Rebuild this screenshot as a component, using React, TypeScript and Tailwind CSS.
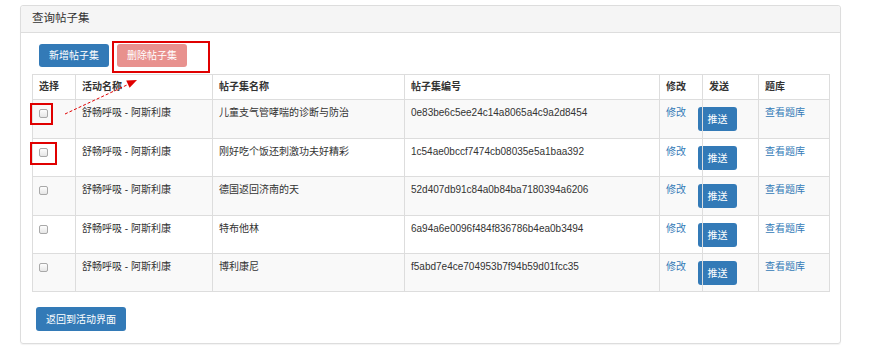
import React from "react";

const rows = [
  { name: "儿童支气管哮喘的诊断与防治", code: "0e83be6c5ee24c14a8065a4c9a2d8454" },
  { name: "刚好吃个饭还刺激功夫好精彩", code: "1c54ae0bccf7474cb08035e5a1baa392" },
  { name: "德国返回济南的天", code: "52d407db91c84a0b84ba7180394a6206" },
  { name: "特布他林", code: "6a94a6e0096f484f836786b4ea0b3494" },
  { name: "博利康尼", code: "f5abd7e4ce704953b7f94b59d01fcc35" },
];

const heights = ["h-[39px]", "h-[38px]", "h-[39px]", "h-[38px]", "h-[38px]"];

function Check() {
  return (
    <div className="w-[9px] h-[9px] rounded-[2px] border border-[#a9a9a9] bg-gradient-to-b from-[#fdfdfd] to-[#e6e6e6]" />
  );
}

export default function App() {
  return (
    <div
      className="relative w-[871px] h-[357px] bg-white pt-[5px] pl-[20px] text-[#333]"
      style={{ fontFamily: '"Liberation Sans", "Noto Sans CJK SC", sans-serif' }}
    >
      <div className="w-[821px] h-[339px] border border-[#ddd] rounded-[3px] shadow-[0_1px_1px_rgba(0,0,0,0.05)]">
        <div className="h-[27px] bg-[#f5f5f5] border-b border-[#ddd] rounded-t-[3px] pl-[11px] flex items-center text-[11.5px]">
          查询帖子集
        </div>
        <div className="pl-[11px] pt-[11px]">
          <div className="flex gap-[8px] ml-[7px]">
            <div className="w-[70px] h-[23px] rounded-[3px] bg-[#337ab7] text-white text-[10px] flex items-center justify-center">
              新增帖子集
            </div>
            <div className="w-[70px] h-[23px] rounded-[3px] bg-[#e8918e] text-white text-[10px] flex items-center justify-center">
              删除帖子集
            </div>
          </div>
          <table className="mt-[7px] table-fixed border-collapse w-[797px] text-[10px]">
            <colgroup>
              <col className="w-[43px]" />
              <col className="w-[137px]" />
              <col className="w-[192px]" />
              <col className="w-[255px]" />
              <col className="w-[43px]" />
              <col className="w-[56px]" />
              <col className="w-[71px]" />
            </colgroup>
            <thead>
              <tr className="h-[25px]">
                {["选择", "活动名称", "帖子集名称", "帖子集编号", "修改", "发送", "题库"].map((h) => (
                  <th key={h} className="border border-[#ddd] px-[6px] text-left font-bold align-middle leading-[14px]">
                    {h}
                  </th>
                ))}
              </tr>
            </thead>
            <tbody>
              {rows.map((r, i) => (
                <tr key={r.code} className={`${heights[i]} ${i % 2 === 0 ? "bg-[#f9f9f9]" : "bg-white"}`}>
                  <td className="border border-[#ddd] px-[6px] pt-[9px] align-top">
                    <Check />
                  </td>
                  <td className="border border-[#ddd] px-[6px] pt-[6px] align-top leading-[14px]">舒畅呼吸 - 阿斯利康</td>
                  <td className="border border-[#ddd] px-[6px] pt-[6px] align-top leading-[14px]">{r.name}</td>
                  <td className="border border-[#ddd] px-[6px] pt-[6px] align-top leading-[14px]">{r.code}</td>
                  <td className="border border-[#ddd] px-[6px] pt-[6px] align-top leading-[14px] text-[#337ab7]">修改</td>
                  <td className="border border-[#ddd] px-0 pt-[7px] align-top">
                    <div className="-ml-[5px] w-[39px] h-[24px] rounded-[3px] bg-[#337ab7] text-white text-[10px] flex items-center justify-center">
                      推送
                    </div>
                  </td>
                  <td className="border border-[#ddd] px-[6px] pt-[6px] align-top leading-[14px] text-[#337ab7]">查看题库</td>
                </tr>
              ))}
            </tbody>
          </table>
          <div className="mt-[15px] ml-[4px] w-[90px] h-[24px] rounded-[3px] bg-[#337ab7] text-white text-[10px] flex items-center justify-center">
            返回到活动界面
          </div>
        </div>
      </div>

      {/* annotations */}
      <div className="absolute left-[112px] top-[41px] w-[98px] h-[32px] border-2 border-[#e00000]" />
      <div className="absolute left-[30px] top-[103px] w-[23px] h-[22px] border-2 border-[#e00000]" />
      <div className="absolute left-[30px] top-[142px] w-[27px] h-[23px] border-2 border-[#e00000]" />
      <svg className="absolute left-0 top-0" width="871" height="357">
        <line x1="65" y1="114" x2="128" y2="84.5" stroke="#e00000" strokeWidth="1" strokeDasharray="3 2" />
        <polygon points="137,80 129.6,87.8 126.2,80.6" fill="#e00000" />
      </svg>
    </div>
  );
}
